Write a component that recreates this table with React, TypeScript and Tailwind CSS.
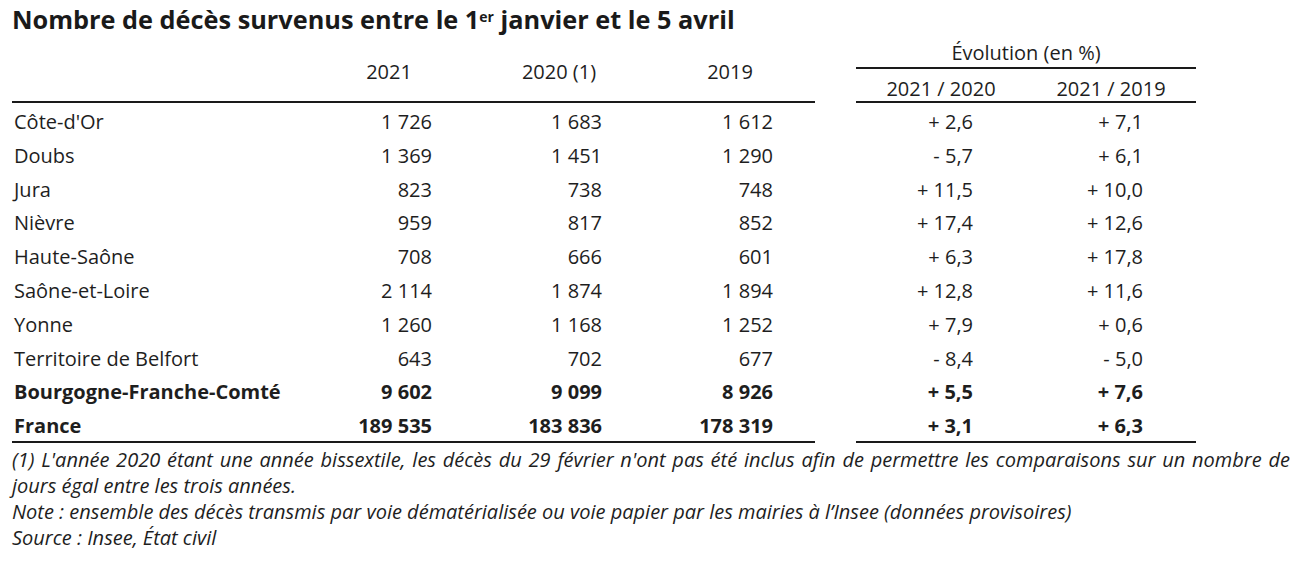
const rows = [
  { name: "Côte-d'Or", v: ["1 726", "1 683", "1 612"], e: ["+ 2,6", "+ 7,1"] },
  { name: "Doubs", v: ["1 369", "1 451", "1 290"], e: ["- 5,7", "+ 6,1"] },
  { name: "Jura", v: ["823", "738", "748"], e: ["+ 11,5", "+ 10,0"] },
  { name: "Nièvre", v: ["959", "817", "852"], e: ["+ 17,4", "+ 12,6"] },
  { name: "Haute-Saône", v: ["708", "666", "601"], e: ["+ 6,3", "+ 17,8"] },
  { name: "Saône-et-Loire", v: ["2 114", "1 874", "1 894"], e: ["+ 12,8", "+ 11,6"] },
  { name: "Yonne", v: ["1 260", "1 168", "1 252"], e: ["+ 7,9", "+ 0,6"] },
  { name: "Territoire de Belfort", v: ["643", "702", "677"], e: ["- 8,4", "- 5,0"] },
  { name: "Bourgogne-Franche-Comté", v: ["9 602", "9 099", "8 926"], e: ["+ 5,5", "+ 7,6"], bold: true },
  { name: "France", v: ["189 535", "183 836", "178 319"], e: ["+ 3,1", "+ 6,3"], bold: true },
];

const years = ["2021", "2020 (1)", "2019"];

export default function App() {
  return (
    <div className="min-h-screen bg-white text-[#1e1e1e] font-['Open_Sans',sans-serif]">
      <div className="pl-3 pr-[10px] pt-[4px]">
        <h1 className="text-[25.3px] font-bold leading-[31px] text-[#1a1a1a]">
          Nombre de décès survenus entre le 1
          <sup className="text-[14px] font-bold">er</sup> janvier et le 5 avril
        </h1>

        <div className="-mt-px flex items-start gap-[41px] text-[20px]">
          {/* bloc effectifs */}
          <div className="w-[803px]">
            <div className="grid h-[69px] grid-cols-[250px_170px_170px_171px_42px] items-center border-b-2 border-[#1a1a1a] pt-[9px]">
              <div />
              {years.map((y) => (
                <div key={y} className="flex justify-end">
                  <span className="w-[86px] whitespace-nowrap text-center">{y}</span>
                </div>
              ))}
              <div />
            </div>
            <div className="border-b-2 border-[#1a1a1a]">
              {rows.map((r) => (
                <div
                  key={r.name}
                  className={`grid h-[33.8px] grid-cols-[250px_170px_170px_171px_42px] items-center pt-[4px] ${
                    r.bold ? "font-bold" : ""
                  }`}
                >
                  <span className="whitespace-nowrap pl-[2px]">{r.name}</span>
                  {r.v.map((x, i) => (
                    <span key={i} className="text-right">
                      {x}
                    </span>
                  ))}
                  <span />
                </div>
              ))}
            </div>
          </div>

          {/* bloc évolution */}
          <div className="w-[340px]">
            <div className="flex h-[35px] items-center justify-center border-b-2 border-[#1a1a1a] pt-[5px]">
              Évolution (en %)
            </div>
            <div className="grid h-[34px] grid-cols-2 items-center border-b-2 border-[#1a1a1a] pt-[5px]">
              <span className="text-center">2021 / 2020</span>
              <span className="text-center">2021 / 2019</span>
            </div>
            <div className="border-b-2 border-[#1a1a1a]">
              {rows.map((r) => (
                <div
                  key={r.name}
                  className={`grid h-[33.8px] grid-cols-2 items-center pt-[4px] ${r.bold ? "font-bold" : ""}`}
                >
                  {r.e.map((x, i) => (
                    <span key={i} className="pr-[53px] text-right">
                      {x}
                    </span>
                  ))}
                </div>
              ))}
            </div>
          </div>
        </div>

        <div className="mt-[4px] text-justify text-[20px] italic leading-[26px] text-[#1e1e1e]">
          <p>
            (1) L'année 2020 étant une année bissextile, les décès du 29 février n'ont pas été inclus afin de
            permettre les comparaisons sur un nombre de jours égal entre les trois années.
          </p>
          <p>
            Note : ensemble des décès transmis par voie dématérialisée ou voie papier par les mairies à l’Insee
            (données provisoires)
          </p>
          <p>Source : Insee, État civil</p>
        </div>
      </div>
    </div>
  );
}
